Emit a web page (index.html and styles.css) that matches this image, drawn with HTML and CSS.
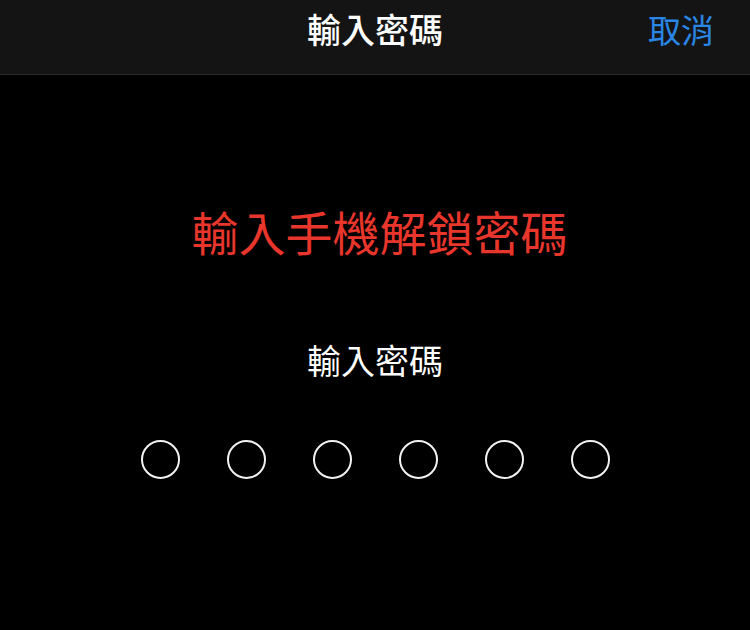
FILE: index.html
```html
<!DOCTYPE html>
<html lang="zh-Hant">
<head>
<meta charset="utf-8">
<link rel="stylesheet" href="styles.css">
</head>
<body>
<header class="bar">
  <div class="bar-side"></div>
  <h1 class="bar-title">輸入密碼</h1>
  <div class="bar-side bar-right"><span class="cancel">取消</span></div>
</header>
<main class="content">
  <p class="warning">輸入手機解鎖密碼</p>
  <p class="prompt">輸入密碼</p>
  <div class="dots">
    <span class="dot"></span>
    <span class="dot"></span>
    <span class="dot"></span>
    <span class="dot"></span>
    <span class="dot"></span>
    <span class="dot"></span>
  </div>
</main>
</body>
</html>
```
FILE: styles.css
```css
html, body {
  margin: 0;
  padding: 0;
  background: #000;
  width: 750px;
  height: 630px;
  overflow: hidden;
  font-family: "Noto Sans CJK TC", "Noto Sans CJK SC", "Noto Sans", sans-serif;
}
.bar {
  height: 75px;
  box-sizing: border-box;
  padding-bottom: 16px;
  background: #141414;
  border-bottom: 1px solid #2a2a2a;
  display: grid;
  grid-template-columns: 1fr auto 1fr;
  align-items: center;
}
.bar-title {
  margin: 0;
  color: #fff;
  font-size: 34px;
  font-weight: 500;
  line-height: 1;
}
.bar-right {
  display: flex;
  justify-content: flex-end;
  padding-right: 36px;
}
.cancel {
  color: #2a86e4;
  font-size: 33px;
  line-height: 1;
}
.content {
  display: flex;
  flex-direction: column;
  align-items: center;
}
.warning {
  margin: 132px 0 0;
  padding-left: 9px;
  color: #e8362c;
  font-size: 47px;
  line-height: 1;
  font-weight: 400;
}
.prompt {
  margin: 89px 0 0;
  color: #fff;
  font-size: 34px;
  line-height: 1;
}
.dots {
  margin-top: 63px;
  display: flex;
  gap: 47px;
}
.dot {
  width: 35px;
  height: 35px;
  border: 2px solid #f2f2f2;
  border-radius: 50%;
}
```
